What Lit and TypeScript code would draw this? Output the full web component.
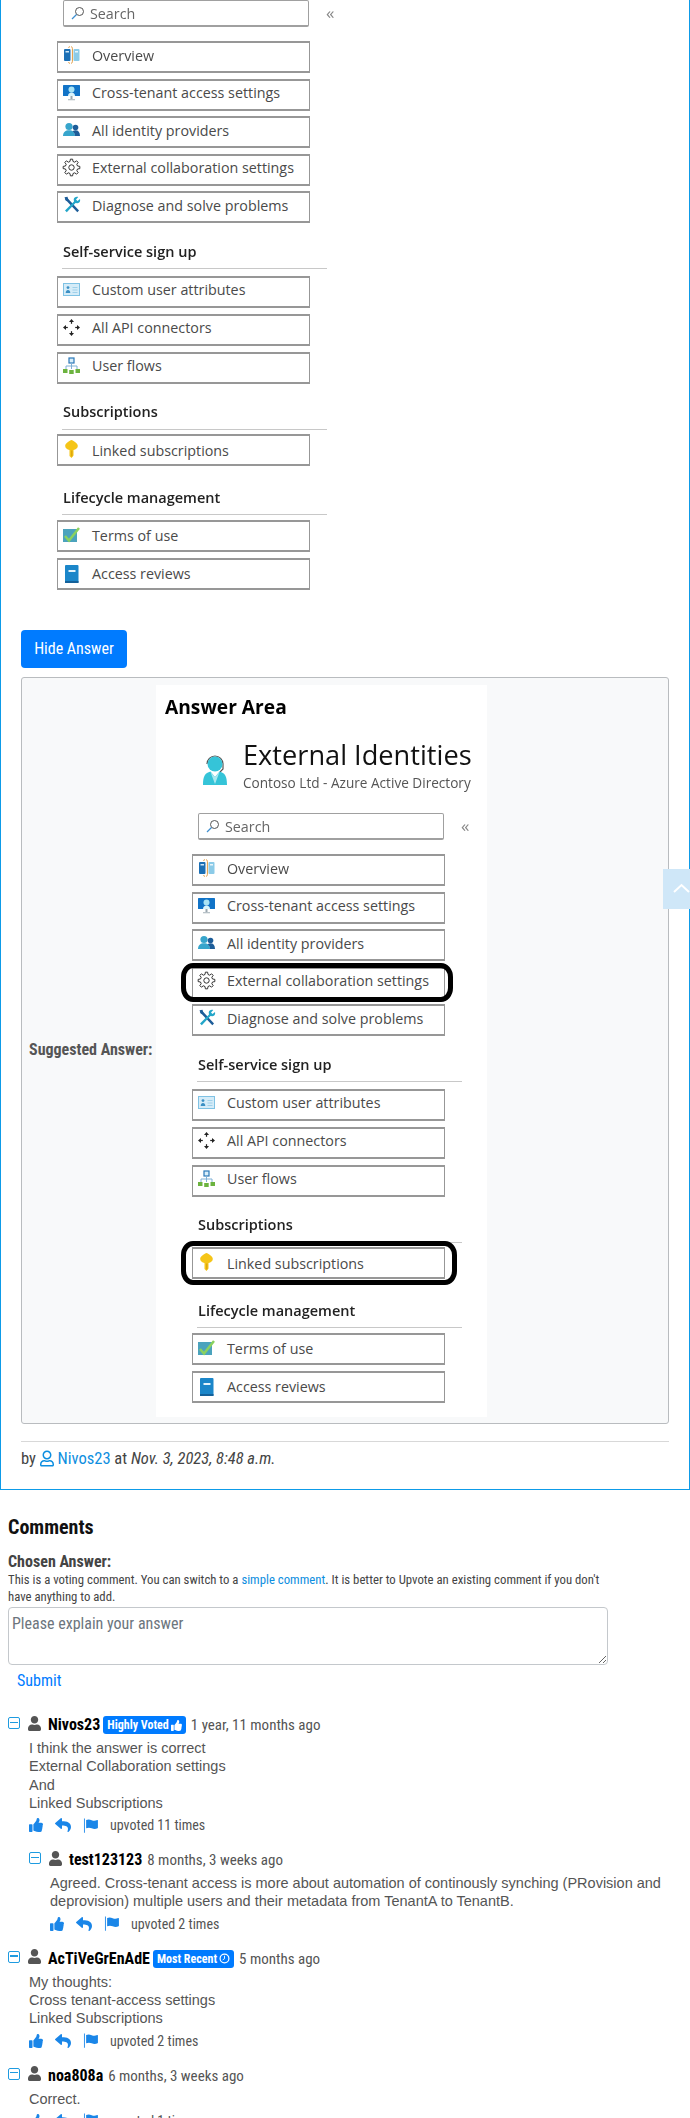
import { LitElement, html, css, svg } from "lit";
import { customElement, property } from "lit/decorators.js";

const FA = {
  thumb: ["0 0 512 512", "M104 224H24c-13.255 0-24 10.745-24 24v240c0 13.255 10.745 24 24 24h80c13.255 0 24-10.745 24-24V248c0-13.255-10.745-24-24-24zM384 81.452c0 42.416-25.97 66.208-33.277 94.548h101.723c33.397 0 59.397 27.746 59.553 58.098.084 17.938-7.546 37.249-19.439 49.197l-.11.11c9.836 23.337 8.237 56.037-9.308 79.469 8.681 25.895-.069 57.704-16.382 74.757 4.298 17.598 2.244 32.575-6.148 44.632C440.202 511.587 389.616 512 346.839 512l-2.845-.001c-48.287-.017-87.806-17.598-119.56-31.725-15.957-7.099-36.821-15.887-52.651-16.178-6.54-.12-11.783-5.457-11.783-11.998v-213.77c0-3.2 1.282-6.271 3.558-8.521 39.614-39.144 56.648-80.587 89.117-113.111 14.804-14.832 20.188-37.236 25.393-58.902C282.515 39.293 291.817 0 312 0c24 0 72 8 72 81.452z"],
  reply: ["0 0 512 512", "M8.309 189.836L184.313 37.851C199.719 24.546 224 35.347 224 56.015v80.053c160.629 1.839 288 34.032 288 186.258 0 61.441-39.581 122.309-83.333 154.132-13.653 9.931-33.111-2.533-28.077-18.631 45.344-145.012-21.507-183.51-176.59-185.742V360c0 20.7-24.3 31.453-39.687 18.164l-176.004-152c-11.071-9.562-11.086-26.753 0-36.328z"],
  flag: ["0 0 512 512", "M16 20h30v480H16zM90 70c60-30 120-25 190 5s120 25 190-5c12-5 22 2 22 14v250c0 8-4 14-12 18-70 32-130 30-200 0-60-25-120-28-190 0z"],
  user: ["0 0 448 512", "M224 256c70.7 0 128-57.3 128-128S294.7 0 224 0 96 57.3 96 128s57.3 128 128 128zm89.6 32h-16.7c-22.2 10.2-46.9 16-72.9 16s-50.6-5.8-72.9-16h-16.7C60.2 288 0 348.2 0 422.4V464c0 26.5 21.5 48 48 48h352c26.5 0 48-21.5 48-48v-41.6c0-74.2-60.2-134.4-134.4-134.4z"],
  userO: ["0 0 448 512", "M313.6 304c-28.7 0-42.5 16-89.6 16-47.1 0-60.8-16-89.6-16C60.2 304 0 364.2 0 438.4V464c0 26.5 21.5 48 48 48h352c26.5 0 48-21.5 48-48v-25.6c0-74.2-60.2-134.4-134.4-134.4zM400 464H48v-25.6c0-47.6 38.8-86.4 86.4-86.4 14.6 0 38.3 16 89.6 16 51.7 0 74.9-16 89.6-16 47.6 0 86.4 38.8 86.4 86.4V464zM224 288c79.5 0 144-64.5 144-144S303.5 0 224 0 80 64.5 80 144s64.5 144 144 144zm0-240c52.9 0 96 43.1 96 96s-43.1 96-96 96-96-43.1-96-96 43.1-96 96-96z"],
};
const fa = (k: keyof typeof FA, cls: string) =>
  html`<svg class=${cls} viewBox=${FA[k][0]} fill="currentColor" aria-hidden="true"><path d=${FA[k][1]}></path></svg>`;

// Outline of an eight-toothed cog, centred on the 17x17 icon box.
const cogPath = (() => {
  const out: string[] = [];
  const n = 8;
  for (let i = 0; i < n; i++) {
    const a = (i * 2 * Math.PI) / n;
    const w = Math.PI / n;
    const pts: [number, number][] = [[6.2, a - w * 0.62], [8.4, a - w * 0.34], [8.4, a + w * 0.34], [6.2, a + w * 0.62]];
    pts.forEach(([r, t], j) => {
      const x = (8.5 + r * Math.cos(t)).toFixed(2);
      const y = (8.5 + r * Math.sin(t)).toFixed(2);
      out.push(`${i === 0 && j === 0 ? "M" : "L"}${x} ${y}`);
    });
  }
  return out.join("") + "Z";
})();

const ICONS: Record<string, unknown> = {
  overview: svg`<rect x="1" y="3" width="6.5" height="12" rx="1" fill="#1b6fb5"/><rect x="10.500" y="3" width="6" height="12" rx="1" fill="#8ccbe8"/><rect x="2.500" y="5" width="3.500" height="1.500" fill="#cfe6f5"/><rect x="12" y="5" width="3" height="1.500" fill="#eaf6fb"/><path d="M8 .8C9 .8 9.400 1.400 9.400 2.500v13c0 1.100-.4 1.700-1.400 1.700" fill="none" stroke="#e29a3f" stroke-width="1"/><path d="M7 .8C6 .8 5.600 1 5.400 1.600M7 17.200c-1 0-1.400-.2-1.600-.8" fill="none" stroke="#e29a3f" stroke-width="1"/>`,
  cross: svg`<rect x="0" y="1" width="17" height="11" rx=".6" fill="#1173c7"/><circle cx="8.500" cy="5.500" r="3" fill="#a9e3f5"/><path d="M5 12c0-2.200 1.500-3.500 3.500-3.500S12 9.800 12 12z" fill="#d8f3fb"/><rect x="7.500" y="12" width="2" height="3" fill="#9aa7b0"/><rect x="5" y="15" width="7" height="1.300" fill="#b8c2c8"/>`,
  identity: svg`<circle cx="6" cy="5.500" r="3.600" fill="#37a5cc"/><path d="M0 15c0-3.800 2.500-5.800 6-5.800s6 2 6 5.800z" fill="#37a5cc"/><circle cx="12.500" cy="6.500" r="2.800" fill="#1d5d99"/><path d="M9.500 10.200c1-.6 2-.9 3-.9 2.800 0 4.500 1.900 4.500 5.700h-5c0-1.900-.9-3.700-2.500-4.800z" fill="#1d5d99"/>`,
  gear: svg`<g fill="none" stroke="#333" stroke-width="1" stroke-linejoin="round"><circle cx="8.500" cy="8.500" r="2.700"/><path d=${cogPath}/></g>`,
  tools: svg`<path d="M3.500 1 16 14.500 14.300 16.300 1.800 3z" fill="#1d5d99"/><path d="M1.500 1.200 4.500 .8 5.200 3.500 3 5.200z" fill="#1d5d99"/><path d="M2 14.500 11 5.500 10.700 3.500C11 1.500 13 .3 15.300 1L13 3.500l1.500 1.500L17 3c.6 2.300-.5 4-2.500 4.300L12.500 7 3.800 16.300z" fill="#23a6c9"/>`,
  card: svg`<rect x=".5" y="2.500" width="16" height="12" fill="#d5ecf8" stroke="#7fc2e4"/><circle cx="5" cy="6.600" r="1.400" fill="#3a8fc4"/><path d="M2.700 12c0-2 1-3 2.300-3s2.300 1 2.300 3z" fill="#3a8fc4"/><path d="M9.500 6.500h5M9.500 9h5M9.500 11.500h5" stroke="#9fd0ea"/>`,
  api: svg`<g fill="#222"><path d="M8.500 0 11 3H6z"/><path d="M8.500 17 6 14h5z"/><path d="M0 8.500 3 6v5z"/><path d="M17 8.500 14 11V6z"/><rect x="7.900" y="3" width="1.200" height="1.800"/><rect x="7.900" y="12.200" width="1.200" height="1.800"/><rect x="3" y="7.900" width="1.800" height="1.200"/><rect x="12.200" y="7.900" width="1.800" height="1.200"/></g>`,
  flows: svg`<rect x="6" y="1" width="5" height="5" fill="#d8eefa" stroke="#2a78b8" stroke-width="1.200"/><path d="M8.500 6v3M3 12V9h11v3M8.500 9v3" fill="none" stroke="#7fb0d6"/><rect x="0" y="12" width="4.500" height="4" fill="#6cb33f"/><rect x="6.200" y="13" width="4.500" height="4" fill="#6cb33f"/><rect x="12.500" y="12" width="4.500" height="4" fill="#6cb33f"/>`,
  key: svg`<path d="M8.500 0C12 1.500 14.800 3.500 14.800 6c0 2-1.900 3.500-4.300 4v5.500L8.500 18l-2-2v-6C4.100 9.500 2.200 8 2.200 6 2.200 3.500 5 1.500 8.500 0z" fill="#f5c518"/><path d="M8.800 10.500V16.500" stroke="#d49b0b"/>`,
  terms: svg`<rect x="0" y="2" width="14" height="13" fill="#4ba3bd"/><path d="M2 9l4 4.500L16 1" fill="none" stroke="#8bd25f" stroke-width="2.500"/>`,
  book: svg`<rect x="2" y="0" width="13.500" height="18" rx="1" fill="#1b86c9"/><rect x="2" y="16" width="13.500" height="2" fill="#14619a"/><rect x="5.500" y="5" width="7" height="2" fill="#e4f3fb"/>`,
};

interface Row { icon: string; label: string; circled?: boolean }
interface Sec { title?: string; cls?: string; rows: Row[] }

const SECS = (mark: boolean): Sec[] => [
  { cls: "s0", rows: [
    { icon: "overview", label: "Overview" },
    { icon: "cross", label: "Cross-tenant access settings" },
    { icon: "identity", label: "All identity providers" },
    { icon: "gear", label: "External collaboration settings", circled: mark },
    { icon: "tools", label: "Diagnose and solve problems" },
  ]},
  { title: "Self-service sign up", cls: "s1", rows: [
    { icon: "card", label: "Custom user attributes" },
    { icon: "api", label: "All API connectors" },
    { icon: "flows", label: "User flows" },
  ]},
  { title: "Subscriptions", cls: "s2", rows: [
    { icon: "key", label: "Linked subscriptions", circled: mark },
  ]},
  { title: "Lifecycle management", cls: "s3", rows: [
    { icon: "terms", label: "Terms of use" },
    { icon: "book", label: "Access reviews" },
  ]},
];

@customElement("azure-menu")
class AzureMenu extends LitElement {
  @property({ type: Boolean }) marked = false;
  static styles = css`
    :host { display: block; width: 290px; font-family: "Open Sans", "Noto Sans", sans-serif; font-stretch: normal; color: #4a4a4a; font-size: 14.300px; }
    .searchline { display: flex; align-items: center; padding-left: 6px; }
    .search { box-sizing: border-box; width: 246px; height: 27px; border: 1px solid #a0a0a0; border-bottom-width: 2px; border-radius: 2px; display: flex; align-items: center; padding-left: 7px; gap: 5px; color: #666; background: #fff; }
    .search svg { width: 14px; height: 14px; }
    .chev { margin-left: 17px; color: #888; font-size: 17px; line-height: 20px; margin-top: -2px; }
    .rows { display: flex; flex-direction: column; gap: 5.500px; }
    .s1 .rows { gap: 6px; }
    .s3 .rows { gap: 6px; }
    .row { box-sizing: border-box; position: relative; width: 253px; height: 32px; border: 2px solid #979797; border-left-width: 1px; border-right-width: 1px; display: flex; align-items: center; padding-left: 34px; padding-bottom: 4px; background: #fff; white-space: nowrap; }
    .row > svg { position: absolute; left: 5px; top: 3px; width: 17px; height: 17px; overflow: visible; }
    .s1 .row { padding-bottom: 5px; }
    .s2 .row { padding-bottom: 0; }
    .s2 .row > svg { top: 4px; }
    .s3 .row { padding-bottom: 2px; }
    .s3 .row > svg { top: 5px; }
    .circled::after { content: ""; position: absolute; left: -12px; right: -9px; top: -6px; bottom: -5px; border: 5px solid #000; border-radius: 12px / 14px; }
    .key::after { right: -13px; top: -8px; bottom: -8px; }
    .s0 { margin-top: 14px; }
    .title { box-sizing: border-box; width: 265px; margin-left: 5px; padding-left: 1px; border-bottom: 1px solid #c8c8c8; font-weight: 600; color: #222; font-size: 14.500px; line-height: 18px; white-space: nowrap; }
    .s1 .title { height: 46px; padding-top: 20px; margin-bottom: 7px; }
    .s2 .title { height: 46px; padding-top: 19px; margin-bottom: 4px; }
    .s3 .title { height: 49px; padding-top: 23px; margin-bottom: 5px; }
    .wrap { filter: blur(.35px); }
  `;
  render() {
    return html`<div class="wrap">
      <div class="searchline">
        <div class="search">
          <svg viewBox="0 0 14 14" fill="none"><circle cx="8.500" cy="5.500" r="4" stroke="#555" stroke-width="1"/><path d="M5.500 8.500 1 13" stroke="#3f8fcf" stroke-width="1.200"/></svg>
          <span>Search</span>
        </div>
        <span class="chev">«</span>
      </div>
      ${SECS(this.marked).map(s => html`
        <div class=${s.cls ?? ""}>
          ${s.title ? html`<div class="title">${s.title}</div>` : null}
          <div class="rows">
            ${s.rows.map(r => html`<div class="row ${r.circled ? "circled" : ""} ${r.circled && r.icon === "key" ? "key" : ""}">
              <svg viewBox="0 0 17 17">${ICONS[r.icon]}</svg><span>${r.label}</span></div>`)}
          </div>
        </div>`)}
    </div>`;
  }
}

interface C { name: string; badge?: "hv" | "mr"; date: string; body: string[]; votes: string; reply?: boolean }

const COMMENTS: C[] = [
  { name: "Nivos23", badge: "hv", date: "1 year, 11 months ago", body: ["I think the answer is correct", "External Collaboration settings", "And", "Linked Subscriptions"], votes: "upvoted 11 times" },
  { name: "test123123", reply: true, date: "8 months, 3 weeks ago", body: ["Agreed. Cross-tenant access is more about automation of continously synching (PRovision and deprovision) multiple users and their metadata from TenantA to TenantB."], votes: "upvoted 2 times" },
  { name: "AcTiVeGrEnAdE", badge: "mr", date: "5 months ago", body: ["My thoughts:", "Cross tenant-access settings", "Linked Subscriptions"], votes: "upvoted 2 times" },
  { name: "noa808a", date: "6 months, 3 weeks ago", body: ["Correct."], votes: "upvoted 1 times" },
];

const RC = css`"Roboto Condensed", Roboto, sans-serif`;

@customElement("app-root")
class AppRoot extends LitElement {
  static styles = css`
    :host { display: block; position: relative; width: 690px; height: 2118px; overflow: hidden; background: #fff; font-family: ${RC}; font-stretch: 88%; color: #444; font-size: 14px; }
    .panel { box-sizing: border-box; height: 1490px; border: 1px solid #0d9be8; border-top: 0; padding: 0 20px; }
    .top { margin-left: 36px; }
    .hide { display: block; margin-top: 40px; height: 38px; width: 106px; border: 0; border-radius: 4px; background: #007bff; color: #fff; font-family: ${RC}; font-stretch: 88%; font-size: 16px; line-height: 38px; padding: 0; }
    .box { box-sizing: border-box; margin-top: 9px; height: 747px; border: 1px solid #b9bcbf; border-radius: 3px; background: #f8f9fa; display: flex; align-items: flex-start; padding: 7px 0 0 7px; }
    .lbl { align-self: center; width: 127px; font-weight: 700; font-size: 16px; color: #555; white-space: nowrap; margin-top: -10px; }
    .shot { box-sizing: border-box; width: 331px; height: 732px; background: #fff; padding: 9px 0 0 36px; }
    .area { margin-left: -27px; font: 700 19.200px/26px "Open Sans", sans-serif; color: #000; filter: blur(.3px); }
    .head { display: flex; height: 65px; margin-top: 15px; filter: blur(.3px); margin-bottom: 13px; }
    .head svg { width: 30px; height: 34px; margin: 17px 0 0 8px; flex: none; }
    .head-t { margin-left: 13px; white-space: nowrap; }
    .h1 { font: 400 27.200px/40px "Open Sans", sans-serif; color: #111; }
    .h2 { font: 400 13.600px/18px "Open Sans", sans-serif; color: #555; margin-top: -1px; }
    hr { border: 0; border-top: 1px solid #d8d8d8; margin: 17px 0 0; }
    .by { margin-top: 7px; line-height: 20px; font-size: 16.500px; color: #444; white-space: nowrap; }
    .by a, .inline { color: #0d8ee0; }
    .by svg { width: 14px; height: 17px; color: #0d8ee0; vertical-align: -3px; }
    em { font-style: italic; }
    .comments { padding-left: 8px; }
    h2 { margin: 27px 0 0; font-weight: 700; font-size: 20px; line-height: 20px; color: #111; }
    .chosen { margin-top: 15px; font-weight: 700; font-size: 16px; line-height: 20px; color: #444; }
    .note { width: 601px; font-size: 12.750px; line-height: 17px; color: #444; margin-top: -1px; }
    textarea { box-sizing: border-box; display: block; margin-top: 2px; width: 600px; height: 58px; border: 1px solid #c4c8cc; border-radius: 4px; padding: 6px 4px 4px 3px; font-family: ${RC}; font-stretch: 88%; font-size: 16px; line-height: 20px; background: #fff; }
    textarea::placeholder { color: #6c757d; }
    .submit { margin: 6px 0 0 9px; font-size: 16px; line-height: 20px; color: #007bff; }
    .list { margin-top: 24px; }
    .c { margin-bottom: 15px; }
    .c.reply { margin-left: 21px; }
    .chead { display: flex; align-items: center; height: 20px; white-space: nowrap; }
    .minus { box-sizing: border-box; flex: none; width: 12px; height: 12px; border: 1.300px solid #1e9be0; border-radius: 2px; margin-top: -4px; position: relative; }
    .minus::after { content: ""; position: absolute; left: 1px; right: 1px; top: 3.500px; height: 1.300px; background: #1e9be0; }
    .uicon { width: 13px; height: 15px; color: #555; margin: -4px 0 0 8px; flex: none; }
    .name { margin-left: 7px; font-weight: 700; font-size: 16px; line-height: 20px; color: #000; }
    .badge { margin-left: 3px; height: 18px; border-radius: 3px; background: #007bff; color: #fff; font-weight: 700; font-size: 12px; line-height: 18px; padding: 0 4px; display: flex; align-items: center; gap: 2px; }
    .badge svg { width: 11px; height: 11px; }
    .date { margin-left: 5px; font-size: 15px; line-height: 20px; color: #555; }
    .body { margin: 4px 0 0 21px; font: 400 14.500px/18.300px "Liberation Sans", Arial, sans-serif; font-stretch: normal; color: #555; }
    .act { display: flex; align-items: center; height: 20px; margin: 3px 0 0 21px; color: #1a86e8; }
    .act svg { flex: none; }
    .i1 { width: 14px; height: 16px; }
    .i2 { width: 16px; height: 16px; margin-left: 12px; }
    .i3 { width: 16px; height: 15px; margin-left: 12px; }
    .votes { margin-left: 11px; font-size: 14px; color: #555; white-space: nowrap; }
    .totop { position: absolute; left: 663px; top: 869px; width: 27px; height: 40px; background-color: #cfe7f8; }
    .totop svg { position: absolute; left: 10px; top: 13px; width: 17px; height: 12px; }
  `;
  badge(b?: "hv" | "mr") {
    if (b === "hv") return html`<span class="badge">Highly Voted ${fa("thumb", "")}</span>`;
    if (b === "mr") return html`<span class="badge">Most Recent <svg viewBox="0 0 12 12" fill="none" stroke="#fff"><circle cx="6" cy="6" r="4.800" stroke-width="1.300"/><path d="M6 3v3.200L4 7.500" stroke-width="1"/></svg></span>`;
    return null;
  }
  render() {
    return html`
      <div class="panel">
        <div class="top"><azure-menu></azure-menu></div>
        <button class="hide">Hide Answer</button>
        <div class="box">
          <div class="lbl">Suggested Answer:</div>
          <div class="shot">
            <div class="area">Answer Area</div>
            <div class="head">
              <svg viewBox="0 0 30 34"><path d="M7 12a8 8 0 0 1 16 0" fill="none" stroke="#555" stroke-width="1.200"/><path d="M23 12v5l-3 3" fill="none" stroke="#555" stroke-width="1.200"/><circle cx="15" cy="12" r="7.500" fill="#35c4d8"/><path d="M3 33c0-9 2-12 7.500-13.500L15 25l4.500-5.500C25 21 27 24 27 33z" fill="#35c4d8"/><path d="M10.500 20 15 32l4.500-12L15 25z" fill="#a9e8ef"/></svg>
              <div class="head-t"><div class="h1">External Identities</div><div class="h2">Contoso Ltd - Azure Active Directory</div></div>
            </div>
            <azure-menu marked></azure-menu>
          </div>
        </div>
        <hr />
        <div class="by">by ${fa("userO", "")} <a>Nivos23</a> at <em>Nov. 3, 2023, 8:48 a.m.</em></div>
      </div>
      <div class="comments">
        <h2>Comments</h2>
        <div class="chosen">Chosen Answer:</div>
        <div class="note">This is a voting comment. You can switch to a <span class="inline">simple comment</span>. It is better to Upvote an existing comment if you don't have anything to add.</div>
        <textarea placeholder="Please explain your answer"></textarea>
        <div class="submit">Submit</div>
        <div class="list">
          ${COMMENTS.map(c => html`
            <div class="c ${c.reply ? "reply" : ""}">
              <div class="chead">
                <span class="minus"></span>${fa("user", "uicon")}
                <span class="name">${c.name}</span>${this.badge(c.badge)}<span class="date">${c.date}</span>
              </div>
              <div class="body">${c.body.map(l => html`<div>${l}</div>`)}</div>
              <div class="act">${fa("thumb", "i1")}${fa("reply", "i2")}${fa("flag", "i3")}<span class="votes">${c.votes}</span></div>
            </div>`)}
        </div>
      </div>
      <div class="totop"><svg viewBox="0 0 17 12" fill="none" stroke="#fff" stroke-width="2"><path d="M1 10 8.500 3 16 10"/></svg></div>
    `;
  }
}
